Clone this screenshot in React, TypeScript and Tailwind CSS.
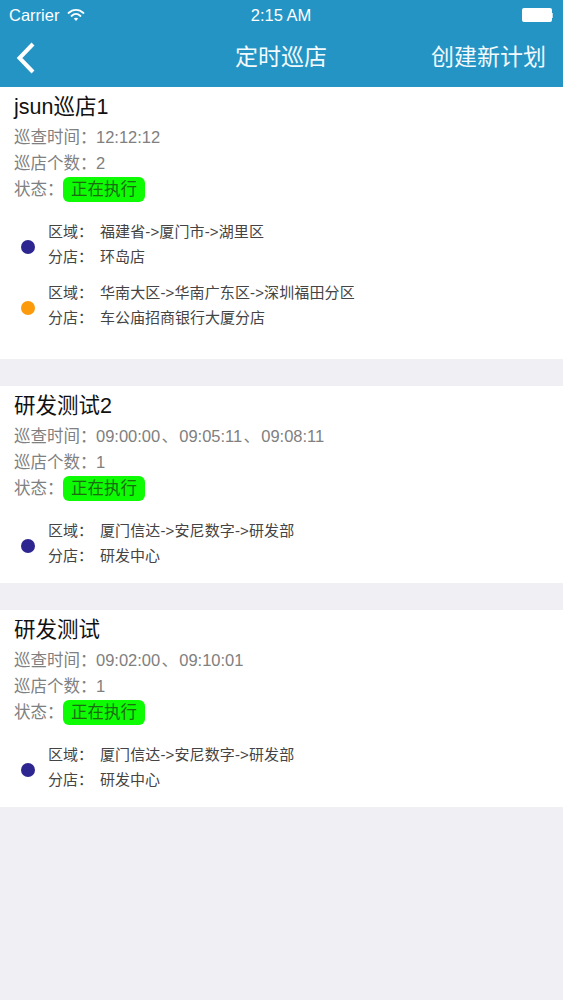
const font = "font-['Liberation_Sans','Noto_Sans_CJK_SC',sans-serif]";

interface Store {
  area: string;
  shop: string;
  dot: string;
}

interface Plan {
  title: string;
  times: string[];
  count: number;
  stores: Store[];
}

const plans: Plan[] = [
  {
    title: 'jsun巡店1',
    times: ['12:12:12'],
    count: 2,
    stores: [
      { area: '福建省->厦门市->湖里区', shop: '环岛店', dot: 'bg-[#2e2690]' },
      { area: '华南大区->华南广东区->深圳福田分区', shop: '车公庙招商银行大厦分店', dot: 'bg-[#fb9a0b]' },
    ],
  },
  {
    title: '研发测试2',
    times: ['09:00:00', '09:05:11', '09:08:11'],
    count: 1,
    stores: [{ area: '厦门信达->安尼数字->研发部', shop: '研发中心', dot: 'bg-[#2e2690]' }],
  },
  {
    title: '研发测试',
    times: ['09:02:00', '09:10:01'],
    count: 1,
    stores: [{ area: '厦门信达->安尼数字->研发部', shop: '研发中心', dot: 'bg-[#2e2690]' }],
  },
];

function StatusBar() {
  return (
    <div className="flex h-[30px] items-center px-[9px] text-[16.5px] text-white">
      <div className="flex flex-1 items-center gap-[8px]">
        <span>Carrier</span>
        <svg width="18" height="14" viewBox="0 0 18 14" fill="none" stroke="white" strokeLinecap="round">
          <path d="M1.5 5 C6 0.8 12 0.8 16.5 5" strokeWidth="1.8" />
          <path d="M4.5 8 C7.3 5.4 10.7 5.4 13.5 8" strokeWidth="1.8" />
          <path d="M9 13 L6.8 10.6 C8 9.6 10 9.6 11.2 10.6 Z" fill="white" stroke="none" />
        </svg>
      </div>
      <span>2:15 AM</span>
      <div className="flex flex-1 items-center justify-end pr-px">
        <div className="h-[14px] w-[30px] rounded-[2px] bg-white" />
        <div className="h-[5px] w-[1.5px] bg-white/70" />
      </div>
    </div>
  );
}

function NavBar() {
  return (
    <div className="flex h-[57px] items-center pb-[2px] pl-[16px] pr-[17px] text-[23px] text-[#f2fafd]">
      <div className="flex-1">
        <svg width="20" height="32" viewBox="0 0 20 32" fill="none" stroke="white" strokeWidth="4" className="block">
          <path d="M17 2 L3.5 16 L17 30" />
        </svg>
      </div>
      <span>定时巡店</span>
      <div className="flex-1 text-right">创建新计划</div>
    </div>
  );
}

function StoreItem({ store }: { store: Store }) {
  return (
    <div className="flex items-center pl-[21px]">
      <div className={`mt-[6px] h-[14px] w-[14px] rounded-full ${store.dot}`} />
      <div className="ml-[13px] text-[15px] leading-[25px] text-[#444]">
        <div className="flex">
          <span className="w-[52px] shrink-0 whitespace-nowrap">区域：</span>
          <span className="tracking-[0.12px]">{store.area}</span>
        </div>
        <div className="flex">
          <span className="w-[52px] shrink-0 whitespace-nowrap">分店：</span>
          <span>{store.shop}</span>
        </div>
      </div>
    </div>
  );
}

function PlanCard({ plan }: { plan: Plan }) {
  return (
    <div className={`bg-white pt-[7px] ${plan.stores.length > 1 ? 'pb-[29px]' : 'pb-[15px]'}`}>
      <div className="pl-[14px]">
        <div className="text-[21.5px] leading-[26px] text-[#111]">{plan.title}</div>
        <div className="mt-[4px] text-[16.5px] leading-[26px] text-[#808080]">
          <div className="flex">
            <span className="w-[82px] shrink-0 whitespace-nowrap">巡查时间：</span>
            <span className="flex">
              {plan.times.map((time, index) => (
                <span key={index}>
                  {index > 0 && <span className="px-[1.25px]">、</span>}
                  {time}
                </span>
              ))}
            </span>
          </div>
          <div className="flex">
            <span className="w-[82px] shrink-0 whitespace-nowrap">巡店个数：</span>
            <span>{plan.count}</span>
          </div>
          <div className="flex items-center">
            <span className="w-[49px] shrink-0 whitespace-nowrap">状态：</span>
            <span className="flex h-[25px] w-[82px] items-center justify-center rounded-[6px] bg-[#0dfc03] text-[#1c6a12]">
              正在执行
            </span>
          </div>
        </div>
      </div>
      <div className="mt-[17px] flex flex-col gap-[11px]">
        {plan.stores.map((store, index) => (
          <StoreItem key={index} store={store} />
        ))}
      </div>
    </div>
  );
}

export default function App() {
  return (
    <div className={`${font} min-h-[1000px] bg-[#efeff4]`}>
      <div className="bg-[#2394c4]">
        <StatusBar />
        <NavBar />
      </div>
      <div className="flex flex-col gap-[27px]">
        {plans.map((plan, index) => (
          <PlanCard key={index} plan={plan} />
        ))}
      </div>
    </div>
  );
}
